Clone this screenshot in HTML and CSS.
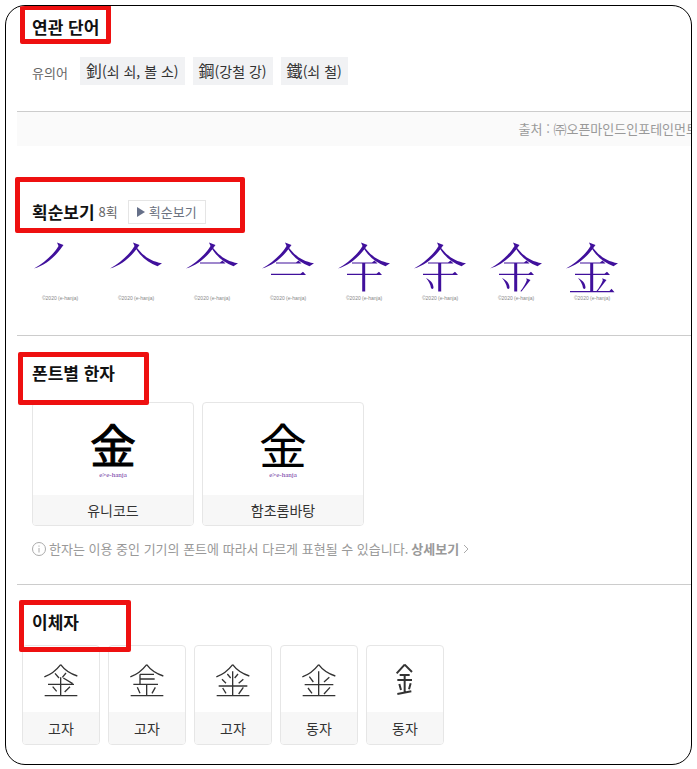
FILE: index.html
```
<!DOCTYPE html>
<html lang="ko">
<head>
    <meta charset="UTF-8">
    <meta name="viewport" content="width=device-width, initial-scale=1.0">
    <title>한자 사전</title>
    <link rel="stylesheet" href="styles.css">
</head>
<body>
    <!-- 획 모양 -->
    <svg class="stroke-defs" aria-hidden="true">
        <defs>
            <g id="s1"><path d="M35 1.500l6.500 2.500-1.500 2C34 15 24 24 12 27.500 22 22 32 13 36.500 5z"/></g>
            <g id="s2"><path d="M37.500 4.500C43 13 51 20 64 22.300L59.500 25.200C50 22 42 15 37 6z"/></g>
            <g id="s3"><path d="M26 21.400h20l2.500-2 3 3.200H26z"/></g>
            <g id="s4"><path d="M21 32.700h29.500l2.500-2 3 3.200H21z"/></g>
            <g id="s5"><path d="M36.200 22h3v28.500h-3z"/></g>
            <g id="s6"><path d="M24 37c4 2 7.500 5 7.500 9.500 0 1.500-1.500 2-2.500.5-.500-4-2.500-7-5-10z"/></g>
            <g id="s7"><path d="M48.200 37.200l4.300 1.800-2 2.500-7 9-1.200-.3c3-3.500 5.500-8 6.500-11z"/></g>
            <g id="s8"><path d="M16 50h39.500l2-2.300 3 3.500H16z"/></g>
        </defs>
    </svg>

    <main class="page">
        <section class="section words">
            <h2 class="title"><span class="mark mark-words"></span>연관 단어</h2>
            <dl class="word-list">
                <dt>유의어</dt>
                <dd><a href="#"><span class="hanja">釗</span>(쇠 쇠, 볼 소)</a></dd>
                <dd><a href="#"><span class="hanja">鋼</span>(강철 강)</a></dd>
                <dd><a href="#"><span class="hanja">鐵</span>(쇠 철)</a></dd>
            </dl>
        </section>

        <p class="source">출처 : ㈜오픈마인드인포테인먼트</p>

        <section class="section strokes">
            <div class="title-row">
                <h2 class="title"><span class="mark mark-strokes"></span>획순보기</h2>
                <span class="count">8획</span>
                <button type="button" class="play-button">
                    <svg width="8" height="10" viewBox="0 0 8 10"><path d="M0 0l8 5-8 5z"/></svg>획순보기
                </button>
            </div>
            <ol class="stroke-list">
                <li><svg viewBox="0 0 76 53"><use href="#s1"/></svg><small>©2020 (e-hanja)</small></li>
                <li><svg viewBox="0 0 76 53"><use href="#s1"/><use href="#s2"/></svg><small>©2020 (e-hanja)</small></li>
                <li><svg viewBox="0 0 76 53"><use href="#s1"/><use href="#s2"/><use href="#s3"/></svg><small>©2020 (e-hanja)</small></li>
                <li><svg viewBox="0 0 76 53"><use href="#s1"/><use href="#s2"/><use href="#s3"/><use href="#s4"/></svg><small>©2020 (e-hanja)</small></li>
                <li><svg viewBox="0 0 76 53"><use href="#s1"/><use href="#s2"/><use href="#s3"/><use href="#s4"/><use href="#s5"/></svg><small>©2020 (e-hanja)</small></li>
                <li><svg viewBox="0 0 76 53"><use href="#s1"/><use href="#s2"/><use href="#s3"/><use href="#s4"/><use href="#s5"/><use href="#s6"/></svg><small>©2020 (e-hanja)</small></li>
                <li><svg viewBox="0 0 76 53"><use href="#s1"/><use href="#s2"/><use href="#s3"/><use href="#s4"/><use href="#s5"/><use href="#s6"/><use href="#s7"/></svg><small>©2020 (e-hanja)</small></li>
                <li><svg viewBox="0 0 76 53"><use href="#s1"/><use href="#s2"/><use href="#s3"/><use href="#s4"/><use href="#s5"/><use href="#s6"/><use href="#s7"/><use href="#s8"/></svg><small>©2020 (e-hanja)</small></li>
            </ol>
        </section>

        <section class="section fonts">
            <h2 class="title"><span class="mark mark-fonts"></span>폰트별 한자</h2>
            <ul class="card-list">
                <li class="card font-card">
                    <div class="card-body"><span class="glyph glyph-bold">金</span><small>e&gt;e-hanja</small></div>
                    <div class="card-name">유니코드</div>
                </li>
                <li class="card font-card">
                    <div class="card-body"><span class="glyph">金</span><small>e&gt;e-hanja</small></div>
                    <div class="card-name">함초롬바탕</div>
                </li>
            </ul>
            <p class="notice">
                <svg width="14" height="14" viewBox="0 0 14 14"><circle cx="7" cy="7" r="6.500"/><path d="M7 6v4.500M7 3.500v1.200"/></svg>
                <span>한자는 이용 중인 기기의 폰트에 따라서 다르게 표현될 수 있습니다.</span>
                <a href="#">상세보기<svg width="6" height="10" viewBox="0 0 6 10"><path d="M1 1l4 4-4 4"/></svg></a>
            </p>
        </section>

        <section class="section variants">
            <h2 class="title"><span class="mark mark-variants"></span>이체자</h2>
            <ul class="card-list">
                <li class="card variant-card">
                    <div class="card-body">
                        <svg viewBox="0 0 102 100"><path d="M50 2Q30 28 1 39M50 2Q68 26 100 36M33 28l12 14M66 27L55 40M58 42l28 17M50 40v54M12 61h78M26 68l12 14M78 68L62 84M2 95h98"/></svg>
                    </div>
                    <div class="card-name">고자</div>
                </li>
                <li class="card variant-card">
                    <div class="card-body">
                        <svg viewBox="0 0 102 100"><path d="M50 2Q30 28 1 39M50 2Q68 26 100 36M30 31h42M30 31v30M30 45h44M10 61h74M50 61v34M22 70l8 18M76 70L66 88M2 95h98"/></svg>
                    </div>
                    <div class="card-name">고자</div>
                </li>
                <li class="card variant-card">
                    <div class="card-body">
                        <svg viewBox="0 0 102 100"><path d="M50 2Q30 28 1 39M50 2Q68 26 100 36M50 22v72M34 30l10 12M66 30L56 42M18 46l12 12M82 46L68 58M8 66h86M20 72l10 16M82 70L68 90M2 95h98"/></svg>
                    </div>
                    <div class="card-name">고자</div>
                </li>
                <li class="card variant-card">
                    <div class="card-body">
                        <svg viewBox="0 0 102 100"><path d="M50 2Q30 28 1 39M50 2Q68 26 100 36M50 22v72M22 38l12 16M82 40L66 54M8 62h86M18 72l12 16M84 70L66 90M2 95h98"/></svg>
                    </div>
                    <div class="card-name">동자</div>
                </li>
                <li class="card variant-card">
                    <div class="card-body">
                        <svg class="heavy" viewBox="0 0 102 100"><path d="M50 2L26 28M50 2l22 22M35 33h30M28 48h44M50 33v52M34 60l5 18M68 58l-5 18M28 90l42-8"/></svg>
                    </div>
                    <div class="card-name">동자</div>
                </li>
            </ul>
        </section>
    </main>
</body>
</html>
```
FILE: styles.css
```
* {
    margin: 0;
    padding: 0;
    box-sizing: border-box;
}

body {
    padding: 5px;
    background-color: #fff;
    color: #333;
    font-family: "Noto Sans CJK KR", sans-serif;
    font-size: 13px;
    line-height: 20px;
}

ul,
ol {
    list-style: none;
}

a {
    color: inherit;
    text-decoration: none;
}

.stroke-defs {
    position: absolute;
    width: 0;
    height: 0;
}

.page {
    border: 1px solid #000;
    border-radius: 20px;
    padding-left: 11px;
    overflow: hidden;
}

.section {
    padding-left: 15px;
    border-bottom: 1px solid #ccc;
}

.title {
    position: relative;
    color: #111;
    font-size: 17px;
    line-height: 24px;
}

/* 빨간 강조 상자 */
.mark {
    position: absolute;
    border: 5px solid #ee1010;
    border-radius: 2px;
}

.mark-words {
    top: -10px;
    left: -12px;
    width: 91px;
    height: 39px;
}

.mark-strokes {
    top: -23px;
    left: -17px;
    width: 230px;
    height: 56px;
}

.mark-fonts {
    top: -9px;
    left: -14px;
    width: 131px;
    height: 53px;
    z-index: 1;
}

.mark-variants {
    top: -10px;
    left: -13px;
    width: 112px;
    height: 52px;
    z-index: 1;
}

/* 연관 단어 */
.words {
    padding-top: 9px;
    padding-bottom: 26px;
}

.word-list {
    display: flex;
    align-items: center;
    gap: 8px;
    margin-top: 18px;
}

.word-list dt {
    margin-right: 4px;
    padding-top: 4px;
    color: #666;
}

.word-list dd {
    padding: 0 6px;
    background-color: #f1f2f4;
    font-size: 14px;
    line-height: 27px;
}

.hanja {
    font-size: 16px;
}

.source {
    margin-right: -7px;
    background-color: #fafafa;
    color: #999;
    line-height: 34px;
    text-align: right;
    white-space: nowrap;
}

/* 획순보기 */
.strokes {
    padding-top: 54px;
    padding-bottom: 32px;
}

.title-row {
    display: flex;
    align-items: center;
}

.count {
    margin: 0 10px 0 4px;
    color: #666;
}

.play-button {
    display: flex;
    align-items: center;
    gap: 4px;
    height: 24px;
    padding: 0 8px;
    border: 1px solid #e5e5e5;
    background-color: #fff;
    color: #6b7280;
    font: inherit;
    cursor: pointer;
}

.play-button svg {
    fill: #667089;
}

.stroke-list {
    display: flex;
    margin-top: 17px;
    margin-left: -10px;
}

.stroke-list li {
    display: flex;
    flex-direction: column;
    width: 76px;
    text-align: center;
}

.stroke-list svg {
    fill: #40109c;
}

.stroke-list small {
    color: #888;
    font-family: "Liberation Sans", sans-serif;
    font-size: 5px;
    line-height: 9px;
}

/* 카드 공통 */
.card-list {
    display: flex;
    gap: 8px;
}

.card {
    border: 1px solid #e6e6e6;
    border-radius: 4px;
    overflow: hidden;
}

.card-body {
    display: flex;
    flex-direction: column;
    align-items: center;
    justify-content: center;
}

.card-name {
    background-color: #f7f7f7;
    font-size: 14px;
    text-align: center;
}

/* 폰트별 한자 */
.fonts {
    padding-top: 25px;
    padding-bottom: 25px;
}

.fonts .card-list {
    margin-top: 17px;
}

.font-card {
    width: 162px;
}

.font-card .card-body {
    height: 92px;
    padding-bottom: 4px;
    color: #000;
}

.font-card .card-name {
    line-height: 30px;
}

.glyph {
    font-size: 48px;
    line-height: 56px;
}

.glyph-bold {
    font-size: 46px;
    -webkit-text-stroke: 1px #000;
}

.font-card small {
    color: #6b2fa0;
    font-family: "Liberation Serif", serif;
    font-size: 7px;
    line-height: 8px;
}

.notice {
    display: flex;
    align-items: center;
    gap: 3px;
    margin-top: 13px;
    color: #999;
}

.notice svg {
    fill: none;
    stroke: #aaa;
}

.notice a {
    display: flex;
    align-items: center;
    gap: 4px;
    font-weight: bold;
}

/* 이체자 */
.variants {
    padding: 25px 0 19px 5px;
    border-bottom: 0;
}

.variants .title {
    margin-left: 10px;
}

.variants .card-list {
    margin-top: 11px;
}

.variant-card {
    width: 78px;
}

.variant-card .card-body {
    height: 66px;
    padding-top: 4px;
}

.variant-card .card-body svg {
    width: 34px;
    fill: none;
    stroke: #333;
    stroke-width: 4;
}

.variant-card .card-body .heavy {
    stroke-width: 6;
}

.variant-card .card-name {
    line-height: 32px;
}
```
